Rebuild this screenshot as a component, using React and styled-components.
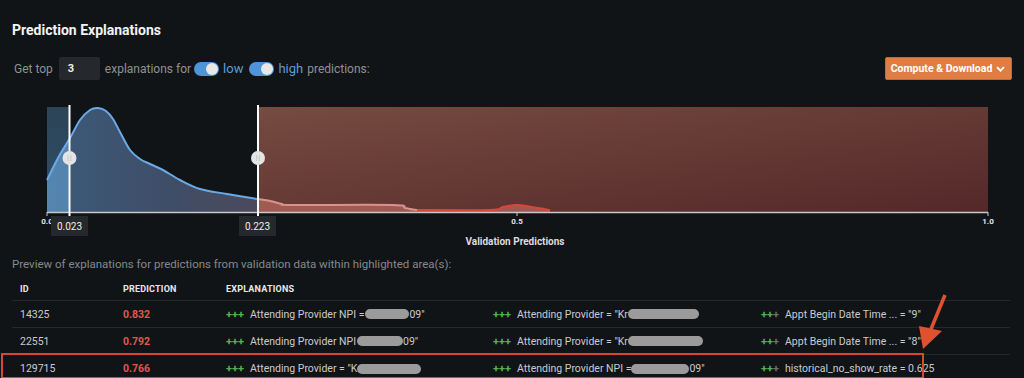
import React from "react";
import styled, { createGlobalStyle } from "styled-components";

const Global = createGlobalStyle`
  html, body { margin: 0; padding: 0; background: #111417; }
  body { font-family: Roboto, "Liberation Sans", sans-serif; color: #d4d6d9; overflow: hidden; }
  * { box-sizing: border-box; }
`;

const Page = styled.div`
  width: 1024px;
  height: 378px;
  background: #111417;
  padding: 21px 12px 0 12px;
`;

const Title = styled.h1`
  margin: 0;
  font-size: 14px;
  font-weight: 700;
  color: #f2f3f4;
  line-height: 18px;
`;

const ControlBar = styled.div`
  display: flex;
  align-items: center;
  justify-content: space-between;
  margin-top: 18px;
  height: 23px;
`;

const Controls = styled.div`
  display: flex;
  align-items: center;
  font-size: 12px;
  color: #8e9194;
  padding-left: 2px;
`;

const Label = styled.span`
  margin-right: ${(p) => p.$mr || 0}px;
  color: ${(p) => (p.$accent ? "#5a9ddb" : "#8e9194")};
  font-size: ${(p) => (p.$accent ? "13px" : "12px")};
`;

const NumberBox = styled.div`
  width: 41px;
  height: 23px;
  background: #25282c;
  border-radius: 2px;
  color: #f0f0f0;
  font-size: 11px;
  font-weight: 700;
  display: flex;
  align-items: center;
  padding-left: 9px;
  margin: 0 5px 0 6px;
`;

const Toggle = styled.span`
  width: 25px;
  height: 14px;
  border-radius: 7px;
  background: #4f93d8;
  position: relative;
  margin-right: 4px;
  &::after {
    content: "";
    position: absolute;
    right: 1px;
    top: 1px;
    width: 12px;
    height: 12px;
    border-radius: 50%;
    background: #e8e8e8;
  }
`;

const Button = styled.button`
  height: 23px;
  width: 127px;
  background: #e07d43;
  border: 1px solid #c9692f;
  border-radius: 2px;
  color: #fff;
  font-family: inherit;
  font-size: 10.5px;
  font-weight: 700;
  display: flex;
  align-items: center;
  justify-content: center;
  gap: 3px;
  padding: 0;
`;

const ChartWrap = styled.div`
  margin: 20px 0 0 -12px;
  width: 1024px;
  height: 138px;
  position: relative;
`;

const Caption = styled.div`
  position: absolute;
  left: 0;
  right: 0;
  top: 136px;
  text-align: center;
  font-size: 10px;
  font-weight: 700;
  color: #dcdddf;
  padding-left: 6px;
`;

const Preview = styled.div`
  margin-top: 19px;
  font-size: 11.5px;
  color: #85888c;
  line-height: 14px;
`;

const Table = styled.div`
  margin-top: 6px;
  position: relative;
  width: 998px;
`;

const Row = styled.div`
  display: grid;
  grid-template-columns: 103px 103px 267px 268px 1fr;
  align-items: center;
  height: 27px;
  padding-left: 8px;
  border-bottom: ${(p) => (p.$last ? "none" : "1px solid #25282c")};
  font-size: ${(p) => (p.$head ? "9px" : "10.5px")};
  font-weight: ${(p) => (p.$head ? 700 : 400)};
  color: ${(p) => (p.$head ? "#e6e7e8" : "#c9cbce")};
  letter-spacing: ${(p) => (p.$head ? "0.2px" : "0")};
`;

const HeadRow = styled(Row)`
  height: 24px;
  padding-top: 1px;
`;

const Pred = styled.span`
  color: #e0574a;
  font-weight: 700;
`;

const Expl = styled.span`
  display: flex;
  align-items: center;
  white-space: nowrap;
`;

const Plus = styled.span`
  color: ${(p) => (p.$dim ? "#6b6e72" : "#52b34f")};
  font-weight: 700;
  font-size: 11px;
`;

const Signs = styled.span`
  margin-right: 6px;
  display: inline-flex;
`;

const Blob = styled.span`
  display: inline-block;
  width: ${(p) => p.$w}px;
  height: 10px;
  border-radius: 5px;
  background: #9b9b9b;
  margin: 0 0 0 ${(p) => p.$ml || 0}px;
`;

const Highlight = styled.div`
  position: absolute;
  left: -11px;
  top: 76px;
  width: 923px;
  height: 26px;
  border: 2px solid #d8482c;
  pointer-events: none;
`;

const ArrowSvg = styled.svg`
  position: absolute;
  left: 893px;
  top: 11px;
`;

function Signs3({ dim }) {
  return (
    <Signs>
      <Plus>+</Plus>
      <Plus>+</Plus>
      <Plus $dim={dim}>+</Plus>
    </Signs>
  );
}

function smooth(pts) {
  let d = `M${pts[0][0]},${pts[0][1]}`;
  for (let i = 0; i < pts.length - 1; i++) {
    const p0 = pts[i - 1] || pts[i];
    const p1 = pts[i];
    const p2 = pts[i + 1];
    const p3 = pts[i + 2] || p2;
    const c1x = p1[0] + (p2[0] - p0[0]) / 6;
    const c1y = p1[1] + (p2[1] - p0[1]) / 6;
    const c2x = p2[0] - (p3[0] - p1[0]) / 6;
    const c2y = p2[1] - (p3[1] - p1[1]) / 6;
    d += ` C${c1x},${c1y} ${c2x},${c2y} ${p2[0]},${p2[1]}`;
  }
  return d;
}

function Chart() {
  const y = (v) => v - 98;
  const blue = [
    [47, 178], [58, 156], [70, 136], [80, 118], [90, 108], [98, 106], [106, 109],
    [113, 117], [120, 130], [130, 148], [140, 157], [150, 162], [163, 168], [180, 178],
    [200, 187], [227, 192], [257, 197],
  ].map((p) => [p[0], y(p[1])]);
  const redA = [
    [257, 197], [270, 199], [282, 202], [292, 203], [393, 203], [405, 206], [417, 208],
  ].map((p) => [p[0], y(p[1])]);
  const redB = [
    [417, 208], [490, 208], [503, 205], [517, 203], [532, 205], [550, 208],
  ].map((p) => [p[0], y(p[1])]);
  const base = y(210);
  const blueLine = smooth(blue);
  const blueFill = `${blueLine} L257,${base} L47,${base} Z`;
  const redLineA = smooth(redA);
  const redLineB = smooth(redB);
  const redFill = `${redLineA} L${redB[1][0]},${redB[1][1]} ${redLineB.replace(/^M[^C]*/, "")} L550,${base} L257,${base} Z`;
  return (
    <svg width="1024" height="138" viewBox="0 0 1024 138">
      <defs>
        <linearGradient id="redbg" x1="0" y1="0" x2="1" y2="1">
          <stop offset="0" stopColor="#764b40" />
          <stop offset="1" stopColor="#542829" />
        </linearGradient>
        <linearGradient id="lowbg" x1="0" y1="0" x2="0" y2="1">
          <stop offset="0" stopColor="#2c4456" />
          <stop offset="1" stopColor="#2f4f6a" />
        </linearGradient>
        <linearGradient id="bluefill" gradientUnits="userSpaceOnUse" x1="47" y1="0" x2="258" y2="0">
          <stop offset="0" stopColor="#5586b0" />
          <stop offset="0.1" stopColor="#5383ad" />
          <stop offset="0.11" stopColor="#3c5877" />
          <stop offset="0.6" stopColor="#3f4d66" />
          <stop offset="1" stopColor="#4c4a5c" />
        </linearGradient>
      </defs>
      <rect x="47" y={y(105)} width="22" height={base - y(105)} fill="url(#lowbg)" />
      <rect x="258" y={y(105)} width="730" height={base - y(105)} fill="url(#redbg)" />
      <path d={blueFill} fill="url(#bluefill)" />
      <path d={redFill} fill="#b5655c" opacity="0.75" />
      <path d={blueLine} fill="none" stroke="#6aaae6" strokeWidth="2" />
      <path d={redLineA} fill="none" stroke="#d9938c" strokeWidth="2" />
      <path d={redLineB} fill="none" stroke="#d8473c" strokeWidth="2" />
      <line x1="47" y1={base + 0.5} x2="988" y2={base + 0.5} stroke="#c8c8c8" strokeWidth="1.5" />
      <line x1="47" y1={base} x2="47" y2={base + 4} stroke="#c8c8c8" />
      <line x1="517" y1={base} x2="517" y2={base + 4} stroke="#c8c8c8" />
      <line x1="988" y1={base} x2="988" y2={base + 4} stroke="#c8c8c8" />
      <g fontFamily="Roboto, sans-serif" fontSize="8" fontWeight="700" fill="#e6e6e6" textAnchor="middle">
        <text x="47" y={y(222)}>0.0</text>
        <text x="517" y={y(222)}>0.5</text>
        <text x="988" y={y(222)}>1.0</text>
      </g>
      {[69.5, 258].map((x) => (
        <g key={x}>
          <line x1={x} y1={y(103)} x2={x} y2={y(215)} stroke="#ffffff" strokeWidth="2" />
          <circle cx={x} cy={y(156)} r="7" fill="#e4e4e4" />
          <g fill="#c4c4c4">
            {[153.5, 155.5, 157.5].map((yy) => (
              <g key={yy}>
                <rect x={x - 2} y={y(yy)} width="1.3" height="1.3" />
                <rect x={x + 0.7} y={y(yy)} width="1.3" height="1.3" />
              </g>
            ))}
          </g>
        </g>
      ))}
      <rect x="51" y={y(214)} width="37" height="20" fill="#25282c" />
      <rect x="239" y={y(214)} width="37" height="20" fill="#25282c" />
      <g fontFamily="Roboto, sans-serif" fontSize="10" fill="#eeeeee" textAnchor="middle">
        <text x="69.5" y={y(228)}>0.023</text>
        <text x="257.5" y={y(228)}>0.223</text>
      </g>
    </svg>
  );
}

export default function App() {
  return (
    <>
      <Global />
      <Page>
        <Title>Prediction Explanations</Title>
        <ControlBar>
          <Controls>
            <Label>Get top</Label>
            <NumberBox>3</NumberBox>
            <Label $mr={3}>explanations for</Label>
            <Toggle />
            <Label $accent $mr={6}>low</Label>
            <Toggle />
            <Label $accent $mr={4}>high</Label>
            <Label>predictions:</Label>
          </Controls>
          <Button>
            Compute &amp; Download
            <svg width="11" height="10" viewBox="0 0 11 10">
              <path d="M2 3.2 L5.5 6.7 L9 3.2" fill="none" stroke="#fff" strokeWidth="1.8" />
            </svg>
          </Button>
        </ControlBar>
        <ChartWrap>
          <Chart />
          <Caption>Validation Predictions</Caption>
        </ChartWrap>
        <Preview>Preview of explanations for predictions from validation data within highlighted area(s):</Preview>
        <Table>
          <HeadRow $head>
            <span>ID</span>
            <span>PREDICTION</span>
            <span>EXPLANATIONS</span>
            <span />
            <span />
          </HeadRow>
          <Row>
            <span>14325</span>
            <Pred>0.832</Pred>
            <Expl><Signs3 />Attending Provider NPI = <Blob $w={44} $ml={1} />09"</Expl>
            <Expl><Signs3 />Attending Provider = "Kr<Blob $w={71} /></Expl>
            <Expl><Signs3 dim />Appt Begin Date Time ... = "9"</Expl>
          </Row>
          <Row>
            <span>22551</span>
            <Pred>0.792</Pred>
            <Expl><Signs3 />Attending Provider NPI <Blob $w={46} $ml={1} />09"</Expl>
            <Expl><Signs3 />Attending Provider = "Kr<Blob $w={75} /></Expl>
            <Expl><Signs3 dim />Appt Begin Date Time ... = "8"</Expl>
          </Row>
          <Row $last>
            <span>129715</span>
            <Pred>0.766</Pred>
            <Expl><Signs3 />Attending Provider = "K<Blob $w={64} /></Expl>
            <Expl><Signs3 />Attending Provider NPI =<Blob $w={58} />09"</Expl>
            <Expl><Signs3 dim />historical_no_show_rate = 0.625</Expl>
          </Row>
          <Highlight />
          <ArrowSvg width="50" height="70" viewBox="0 0 50 70">
            <line x1="40" y1="7" x2="24" y2="46" stroke="#e0512f" strokeWidth="3.5" />
            <polygon points="14,38 37,43 18,61" fill="#e0512f" />
          </ArrowSvg>
        </Table>
      </Page>
    </>
  );
}
